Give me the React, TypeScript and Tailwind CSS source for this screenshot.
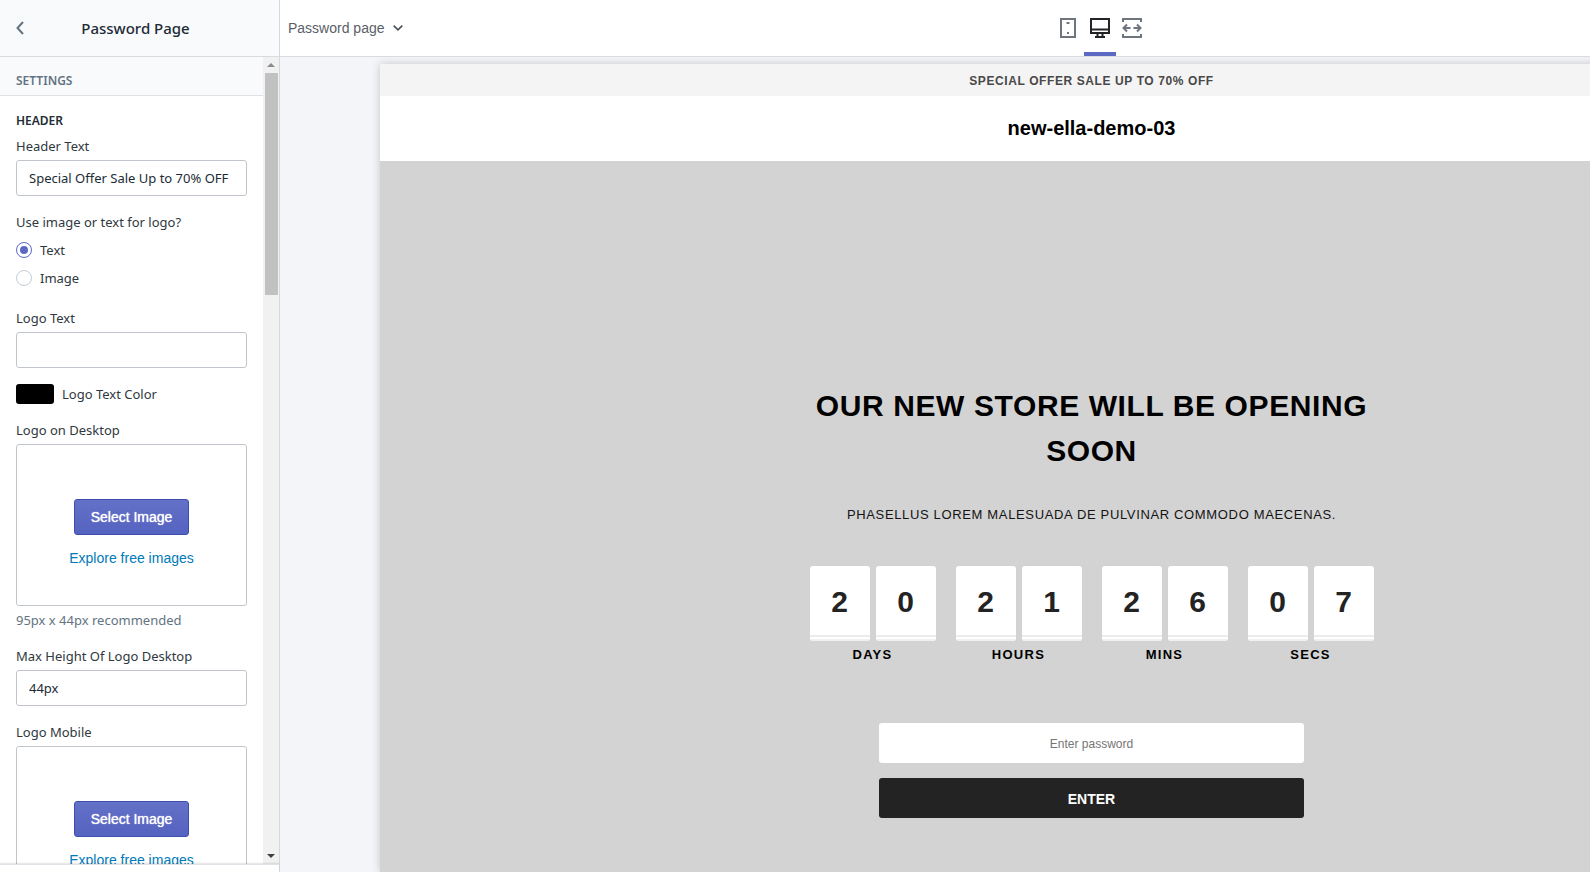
import type { ReactNode } from "react";

const labelText = "text-[13px] leading-5 text-[#303840]";
const inputBox =
  "block h-9 w-full rounded-[3px] border border-[#c0c6cc] bg-white px-3 text-[13px] text-[#212b36] outline-none focus:border-[#5c6ac4]";

function TextField({ id, label, value }: { id: string; label: string; value: string }) {
  return (
    <div className="flex flex-col gap-1">
      <label htmlFor={id} className={labelText}>
        {label}
      </label>
      <input id={id} type="text" defaultValue={value} className={inputBox} />
    </div>
  );
}

function RadioOption({ id, label, checked }: { id: string; label: string; checked?: boolean }) {
  return (
    <div className="flex items-center gap-2">
      <input
        id={id}
        type="radio"
        name="logo-type"
        defaultChecked={checked}
        className="m-0 grid size-4 shrink-0 appearance-none place-items-center rounded-full border border-[#c4cdd5] bg-white before:size-2 before:rounded-full checked:border-[#5c6ac4] checked:before:bg-[#5c6ac4]"
      />
      <label htmlFor={id} className={labelText}>
        {label}
      </label>
    </div>
  );
}

function ImagePicker({ label, hint }: { label: string; hint?: string }) {
  return (
    <div className="flex flex-col gap-1">
      <h3 className={labelText}>{label}</h3>
      <div className="flex h-[162px] flex-col items-center gap-[13px] rounded-[3px] border border-[#c0c6cc] bg-white pt-[54px] font-['Liberation_Sans',Arial,sans-serif]">
        <button
          type="button"
          className="h-9 rounded-[3px] border border-[#3f4eae] bg-linear-to-b from-[#6371c7] to-[#5563c1] px-4 text-sm text-white [text-shadow:0_0_1px_#ffffff]"
        >
          Select Image
        </button>
        <a href="#explore" className="text-sm leading-5 text-[#007ab8]">
          Explore free images
        </a>
      </div>
      {hint && <p className="text-[13px] leading-5 text-[#637381]">{hint}</p>}
    </div>
  );
}

function Scrollbar() {
  return (
    <div aria-hidden="true" className="flex w-4 shrink-0 flex-col items-center bg-[#f1f1f1]">
      <div className="flex h-4 items-center">
        <svg width="8" height="4" viewBox="0 0 8 4">
          <path d="M0 4L4 0L8 4Z" fill="#8b8b8b" />
        </svg>
      </div>
      <div className="h-[27.5%] w-[13px] bg-[#c1c1c1]" />
      <div className="mt-auto flex h-4 items-center">
        <svg width="8" height="4" viewBox="0 0 8 4">
          <path d="M0 0L4 4L8 0Z" fill="#404040" />
        </svg>
      </div>
    </div>
  );
}

function Sidebar() {
  return (
    <aside className="flex w-[280px] shrink-0 flex-col border-r border-[#d5d9de] bg-white font-['Noto_Sans',sans-serif]">
      <header className="flex h-[57px] shrink-0 items-center border-b border-[#d8dce1] bg-[#f9fafc] pr-8 pl-4">
        <button type="button" aria-label="Back" className="text-[#637381]">
          <svg width="8" height="14" viewBox="0 0 8 14" fill="none" stroke="currentColor" strokeWidth="2">
            <path d="M7 1L1.5 7L7 13" />
          </svg>
        </button>
        <h1 className="flex-1 text-center text-[15px] leading-6 font-medium text-[#212b36]">Password Page</h1>
      </header>
      <div className="flex min-h-0 flex-1">
        <div className="min-w-0 flex-1 overflow-y-auto [scrollbar-width:none]">
          <h2 className="flex h-[39px] items-center border-b border-[#dfe3e8] bg-[#f9fafc] px-4 pt-[10px] text-xs font-semibold text-[#637381]">
            SETTINGS
          </h2>
          <form className="flex flex-col gap-4 px-4 pt-[15px] pb-6">
            <div className="flex flex-col gap-[5px]">
              <h3 className="text-xs leading-5 font-semibold text-[#212b36]">HEADER</h3>
              <TextField id="header-text" label="Header Text" value="Special Offer Sale Up to 70% OFF" />
            </div>
            <fieldset className="mb-1">
              <legend className={labelText}>Use image or text for logo?</legend>
              <div className="mt-2 flex flex-col gap-2">
                <RadioOption id="logo-type-text" label="Text" checked />
                <RadioOption id="logo-type-image" label="Image" />
              </div>
            </fieldset>
            <TextField id="logo-text" label="Logo Text" value="" />
            <div className="flex items-center gap-2">
              <button
                id="logo-color"
                type="button"
                aria-labelledby="logo-color-label"
                className="h-5 w-[38px] rounded-[3px] bg-black"
              />
              <label id="logo-color-label" htmlFor="logo-color" className={labelText}>
                Logo Text Color
              </label>
            </div>
            <ImagePicker label="Logo on Desktop" hint="95px x 44px recommended" />
            <TextField id="logo-height" label="Max Height Of Logo Desktop" value="44px" />
            <ImagePicker label="Logo Mobile" />
          </form>
        </div>
        <Scrollbar />
      </div>
      <footer className="h-2 shrink-0 border-t border-[#dfe3e8] bg-white shadow-[0_-1px_2px_rgba(0,0,0,0.12)]" />
    </aside>
  );
}

function DeviceButton({ label, active, children }: { label: string; active?: boolean; children: ReactNode }) {
  return (
    <button
      type="button"
      aria-label={label}
      aria-pressed={!!active}
      className={
        active
          ? "flex h-14 w-8 items-center justify-center border-y-4 border-t-transparent border-b-[#5c6ac4] text-[#212326]"
          : "flex h-14 w-8 items-center justify-center text-[#6f757c]"
      }
    >
      <svg width="20" height="20" viewBox="0 0 20 20" fill="none" stroke="currentColor" strokeWidth="2">
        {children}
      </svg>
    </button>
  );
}

function Toolbar() {
  return (
    <div className="grid h-[57px] shrink-0 grid-cols-[1fr_auto_1fr] items-start border-b border-[#d8dce1] bg-white">
      <button
        type="button"
        className="flex h-14 items-center gap-2 justify-self-start pl-2 text-sm text-[#5a6068]"
      >
        Password page
        <svg width="10" height="6" viewBox="0 0 10 6" fill="none" stroke="#4a5058" strokeWidth="1.6">
          <path d="M0.7 0.7L5 4.8L9.3 0.7" />
        </svg>
      </button>
      <div className="flex">
        <DeviceButton label="Mobile">
          <path d="M3 1H17V19H3Z" />
          <path d="M8.5 5H11.5M9 15H11" />
        </DeviceButton>
        <DeviceButton label="Desktop" active>
          <path d="M1 1H19V15H1ZM1 11.5H19M7.5 15V18M12.5 15V18M5 19H15" />
        </DeviceButton>
        <DeviceButton label="Full width">
          <path d="M1 4V1H19V4M1 16V19H19V16" />
          <path d="M1.5 10H8.5M5 6.5L1.5 10L5 13.5M18.5 10H11.5M15 6.5L18.5 10L15 13.5" />
        </DeviceButton>
      </div>
    </div>
  );
}

const countdown = [
  { label: "DAYS", digits: ["2", "0"] },
  { label: "HOURS", digits: ["2", "1"] },
  { label: "MINS", digits: ["2", "6"] },
  { label: "SECS", digits: ["0", "7"] },
];

function Countdown() {
  return (
    <div className="flex justify-center gap-5">
      {countdown.map((unit) => (
        <div key={unit.label} className="flex flex-col items-center gap-1">
          <div className="flex gap-[6px]">
            {unit.digits.map((digit, i) => (
              <div key={i} className="flex w-[60px] flex-col overflow-hidden rounded-[3px] bg-white">
                <span className="flex h-[69px] items-center justify-center pt-px text-[30px] font-bold text-[#232323]">
                  {digit}
                </span>
                <span className="h-[6px] border-y-2 border-t-[#ececec] border-b-[#f0f0f0]" />
              </div>
            ))}
          </div>
          <span className="text-[13px] leading-5 font-bold tracking-[0.1em] text-black">{unit.label}</span>
        </div>
      ))}
    </div>
  );
}

function Storefront() {
  return (
    <section className="mt-[7px] mr-[117px] ml-[100px] flex flex-1 flex-col bg-[#d3d3d3] text-center shadow-[0_0_8px_rgba(60,64,72,0.25)]">
      <p className="bg-[#f4f4f4] pt-[2px] text-xs leading-[30px] font-bold tracking-[0.05em] text-[#484848]">
        SPECIAL OFFER SALE UP TO 70% OFF
      </p>
      <div className="bg-white py-[17px] text-xl leading-[31px] font-bold text-black">new-ella-demo-03</div>
      <div className="flex flex-col items-center pt-[222px]">
        <h2 className="w-[570px] text-[30px] leading-[45px] font-bold tracking-[0.02em] text-black">
          OUR NEW STORE WILL BE OPENING SOON
        </h2>
        <p className="mt-8 text-[13px] leading-5 tracking-[0.05em] text-[#141414]">
          PHASELLUS LOREM MALESUADA DE PULVINAR COMMODO MAECENAS.
        </p>
        <div className="mt-[41px]">
          <Countdown />
        </div>
        <form className="mt-[58px] flex w-[425px] flex-col gap-[15px]">
          <input
            type="password"
            aria-label="Enter password"
            placeholder="Enter password"
            className="h-10 rounded-[3px] bg-white pt-px text-center text-xs outline-none placeholder:text-[#757575]"
          />
          <button
            type="button"
            className="h-10 rounded-[3px] bg-[#232323] pt-px text-sm font-bold text-white"
          >
            ENTER
          </button>
        </form>
      </div>
    </section>
  );
}

export default function App() {
  return (
    <div className="flex h-screen overflow-hidden bg-[#f4f5f8] font-['Liberation_Sans',Arial,sans-serif]">
      <Sidebar />
      <main className="min-w-0 flex-1 overflow-hidden">
        <div className="mr-[-330px] flex h-full flex-col">
          <Toolbar />
          <div className="flex min-h-0 flex-1 flex-col overflow-hidden">
            <Storefront />
          </div>
        </div>
      </main>
    </div>
  );
}
